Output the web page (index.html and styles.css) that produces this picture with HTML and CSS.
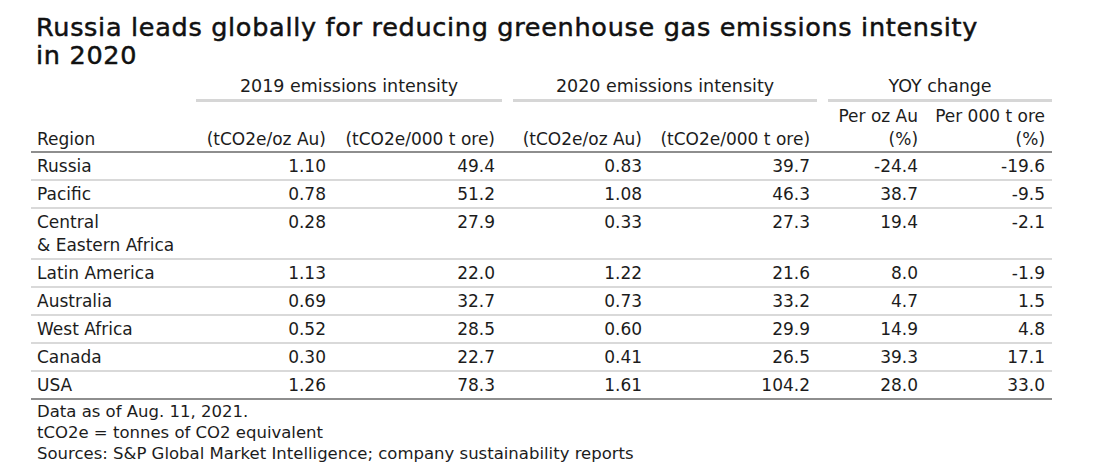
FILE: index.html
```html
<!DOCTYPE html>
<html lang="en">
<head>
<meta charset="utf-8">
<title>Russia leads globally for reducing greenhouse gas emissions intensity in 2020</title>
<link rel="stylesheet" href="styles.css">
</head>
<body>
<div class="chart">
  <h1 class="title">Russia leads globally for reducing greenhouse gas emissions intensity<br>in 2020</h1>
  <table class="data">
    <colgroup>
      <col class="c-region"><col class="c1"><col class="c2"><col class="c3"><col class="c4"><col class="c5"><col class="c6">
    </colgroup>
    <thead>
      <tr class="group-row">
        <th></th>
        <th colspan="2"><span class="group">2019 emissions intensity</span></th>
        <th colspan="2"><span class="group">2020 emissions intensity</span></th>
        <th colspan="2"><span class="group">YOY change</span></th>
      </tr>
      <tr class="sub-row">
        <th class="left">Region</th>
        <th>(tCO2e/oz Au)</th>
        <th>(tCO2e/000 t ore)</th>
        <th>(tCO2e/oz Au)</th>
        <th>(tCO2e/000 t ore)</th>
        <th>Per oz Au<br>(%)</th>
        <th>Per 000 t ore<br>(%)</th>
      </tr>
    </thead>
    <tbody>
      <tr><td class="left">Russia</td><td>1.10</td><td>49.4</td><td>0.83</td><td>39.7</td><td>-24.4</td><td>-19.6</td></tr>
      <tr><td class="left">Pacific</td><td>0.78</td><td>51.2</td><td>1.08</td><td>46.3</td><td>38.7</td><td>-9.5</td></tr>
      <tr><td class="left">Central<br>&amp; Eastern Africa</td><td>0.28</td><td>27.9</td><td>0.33</td><td>27.3</td><td>19.4</td><td>-2.1</td></tr>
      <tr><td class="left">Latin America</td><td>1.13</td><td>22.0</td><td>1.22</td><td>21.6</td><td>8.0</td><td>-1.9</td></tr>
      <tr><td class="left">Australia</td><td>0.69</td><td>32.7</td><td>0.73</td><td>33.2</td><td>4.7</td><td>1.5</td></tr>
      <tr><td class="left">West Africa</td><td>0.52</td><td>28.5</td><td>0.60</td><td>29.9</td><td>14.9</td><td>4.8</td></tr>
      <tr><td class="left">Canada</td><td>0.30</td><td>22.7</td><td>0.41</td><td>26.5</td><td>39.3</td><td>17.1</td></tr>
      <tr class="last"><td class="left">USA</td><td>1.26</td><td>78.3</td><td>1.61</td><td>104.2</td><td>28.0</td><td>33.0</td></tr>
    </tbody>
  </table>
  <div class="notes">
    <p>Data as of Aug. 11, 2021.</p>
    <p>tCO2e = tonnes of CO2 equivalent</p>
    <p>Sources: S&amp;P Global Market Intelligence; company sustainability reports</p>
  </div>
</div>
</body>
</html>
```

FILE: styles.css
```css
html, body {
  margin: 0;
  padding: 0;
  background: #ffffff;
}

body {
  font-family: "DejaVu Sans", Inter, sans-serif;
  color: #1c1c1c;
}

.chart {
  width: 1021px;
  padding: 13px 0 0 31px;
}

.title {
  margin: 0 0 0 5px;
  font-size: 25.5px;
  line-height: 28px;
  letter-spacing: 0.7px;
  font-weight: 400;
  -webkit-text-stroke: 0.5px #111111;
  color: #111111;
}

.data {
  width: 1021px;
  border-collapse: collapse;
  table-layout: fixed;
  font-size: 17px;
}

.c-region { width: 154px; }
.c1 { width: 148px; }
.c2 { width: 169px; }
.c3 { width: 147px; }
.c4 { width: 168px; }
.c5 { width: 108px; }
.c6 { width: 127px; }

.data th,
.data td {
  padding: 0 7px 0 6px;
  text-align: right;
  font-weight: 400;
  white-space: nowrap;
}

.data .left {
  text-align: left;
}

.group-row th {
  padding: 7px 0 0 11px;
  text-align: center;
  font-size: 17.5px;
  line-height: 20px;
}

.group {
  display: block;
  padding-bottom: 3px;
  border-bottom: 3px solid #d6d6d6;
}

.sub-row th {
  padding-top: 3px;
  line-height: 23px;
  vertical-align: bottom;
  border-bottom: 2px solid #8e8e8e;
}

.data tbody td {
  padding-top: 2px;
  padding-bottom: 1px;
  line-height: 23px;
  vertical-align: top;
  border-bottom: 2px solid #d9d9d9;
}

.data tbody tr.last td {
  border-bottom: 2px solid #8e8e8e;
}

.notes {
  padding: 1px 0 0 6px;
  font-size: 16.5px;
  line-height: 21px;
}

.notes p {
  margin: 0;
}
```
